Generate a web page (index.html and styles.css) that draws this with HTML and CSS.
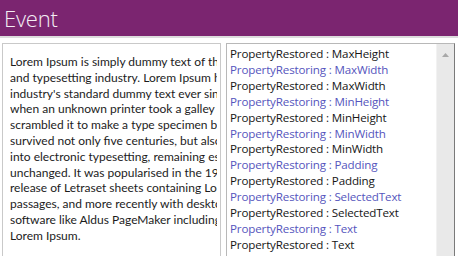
FILE: index.html
```html
<!DOCTYPE html>
<html>
<head>
<meta charset="utf-8">
<link rel="stylesheet" href="styles.css">
</head>
<body>
<header class="header"><span class="title">Event</span></header>
<main class="content">
  <div class="textbox">
    <div class="text">Lorem Ipsum is simply dummy text of the printing<br>and typesetting industry. Lorem Ipsum has been the<br>industry's standard dummy text ever since the 1500s,<br>when an unknown printer took a galley of type and<br>scrambled it to make a type specimen book. It has<br>survived not only five centuries, but also the leap<br>into electronic typesetting, remaining essentially<br>unchanged. It was popularised in the 1960s with the<br>release of Letraset sheets containing Lorem Ipsum<br>passages, and more recently with desktop publishing<br>software like Aldus PageMaker including versions of<br>Lorem Ipsum.</div>
  </div>
  <div class="listbox">
    <ul class="list">
      <li class="restored">PropertyRestored : MaxHeight</li>
      <li class="restoring">PropertyRestoring : MaxWidth</li>
      <li class="restored">PropertyRestored : MaxWidth</li>
      <li class="restoring">PropertyRestoring : MinHeight</li>
      <li class="restored">PropertyRestored : MinHeight</li>
      <li class="restoring">PropertyRestoring : MinWidth</li>
      <li class="restored">PropertyRestored : MinWidth</li>
      <li class="restoring">PropertyRestoring : Padding</li>
      <li class="restored">PropertyRestored : Padding</li>
      <li class="restoring">PropertyRestoring : SelectedText</li>
      <li class="restored">PropertyRestored : SelectedText</li>
      <li class="restoring">PropertyRestoring : Text</li>
      <li class="restored">PropertyRestored : Text</li>
    </ul>
    <div class="scrollbar">
      <svg class="arrow" width="7" height="4" viewBox="0 0 7 4"><polygon points="0,4 7,4 3.5,0" fill="#a8a8a8"/></svg>
    </div>
  </div>
</main>
</body>
</html>
```
FILE: styles.css
```css
html, body {
  margin: 0;
  padding: 0;
  background: #ffffff;
  overflow: hidden;
  height: 256px;
}
body {
  font-family: "Lato", "Open Sans", sans-serif;
}
.header {
  height: 36px;
  background: #7b2570;
  border-bottom: 2px solid #dcdcdc;
  display: flex;
  align-items: center;
  padding-left: 4px;
  box-sizing: content-box;
}
.title {
  color: #f4eef4;
  font-family: "Open Sans", sans-serif;
  font-weight: 300;
  font-size: 22px;
  letter-spacing: -0.2px;
  line-height: 1;
  margin-top: -1px;
}
.content {
  display: flex;
  gap: 5px;
  padding: 5px 3px 0 2px;
  height: 240px;
}
.textbox {
  width: 219px;
  border: 1px solid #c9c9c9;
  overflow: hidden;
  padding: 10px 3px 0 7px;
  box-sizing: border-box;
  flex: none;
  height: 260px;
}
.text {
  white-space: nowrap;
  overflow: hidden;
  font-size: 12px;
  line-height: 15.8px;
  color: #1c1c1c;
}
.listbox {
  width: 229px;
  border: 1px solid #b8b8b8;
  border-right-color: #7a7a7a;
  display: flex;
  box-sizing: border-box;
  height: 260px;
  flex: none;
}
.list {
  list-style: none;
  margin: 0;
  padding: 2px 0 0 3px;
  flex: 1;
  font-family: "Open Sans", sans-serif;
  font-size: 11.6px;
  letter-spacing: -0.15px;
  line-height: 15.9px;
}
.restored {
  color: #161616;
}
.restoring {
  color: #5555bd;
}
.scrollbar {
  width: 18px;
  background: #e9e9e9;
  border-left: 1px solid #f2f2f2;
  display: flex;
  justify-content: center;
  padding-top: 9px;
  box-sizing: border-box;
}
.arrow {
  display: block;
}
```
